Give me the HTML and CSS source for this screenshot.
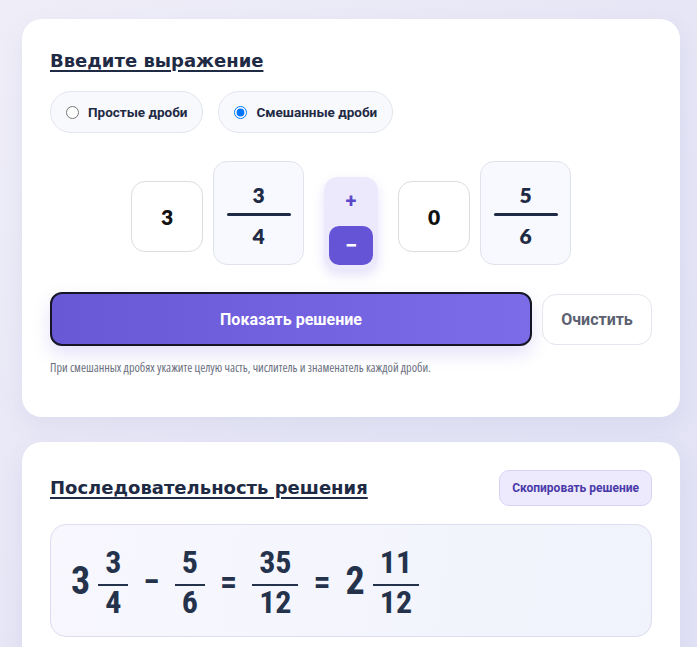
FILE: index.html
```html
<!DOCTYPE html>
<html lang="ru">
<head>
<meta charset="utf-8">
<title>Калькулятор дробей</title>
<link rel="stylesheet" href="styles.css">
</head>
<body>
<main class="page">
  <section class="card card-input">
    <h2 class="title title-input">Введите выражение</h2>
    <div class="modes">
      <label class="pill"><input type="radio" name="mode"><span>Простые дроби</span></label>
      <label class="pill"><input type="radio" name="mode" checked><span>Смешанные дроби</span></label>
    </div>
    <div class="expr">
      <div class="mixed">
        <input class="whole" value="3">
        <div class="frac-box">
          <input class="num" value="3">
          <div class="bar"></div>
          <input class="num" value="4">
        </div>
      </div>
      <div class="ops">
        <button class="op">+</button>
        <button class="op op-active">−</button>
      </div>
      <div class="mixed">
        <input class="whole" value="0">
        <div class="frac-box">
          <input class="num" value="5">
          <div class="bar"></div>
          <input class="num" value="6">
        </div>
      </div>
    </div>
    <div class="actions">
      <button class="btn-primary">Показать решение</button>
      <button class="btn-secondary">Очистить</button>
    </div>
    <p class="hint">При смешанных дробях укажите целую часть, числитель и знаменатель каждой дроби.</p>
  </section>

  <section class="card card-result">
    <div class="result-head">
      <h2 class="title title-result">Последовательность решения</h2>
      <button class="btn-copy">Скопировать решение</button>
    </div>
    <div class="result-box">
      <span class="int">3</span>
      <span class="frac"><span class="n">3</span><span class="d">4</span></span>
      <span class="sign">−</span>
      <span class="frac"><span class="n">5</span><span class="d">6</span></span>
      <span class="sign">=</span>
      <span class="frac"><span class="n">35</span><span class="d">12</span></span>
      <span class="sign">=</span>
      <span class="int">2</span>
      <span class="frac"><span class="n">11</span><span class="d">12</span></span>
    </div>
  </section>
</main>
</body>
</html>
```
FILE: styles.css
```css
html, body {
  margin: 0;
  padding: 0;
}
body {
  background: linear-gradient(135deg, #efeef8 0%, #e6e6f6 50%, #e2e2f5 100%);
  min-height: 647px;
  font-family: Roboto, "Noto Sans", sans-serif;
  color: #1f2a44;
}
.page {
  padding: 19px 17px 0 22px;
}
.card {
  background: #fff;
  border-radius: 20px;
  padding: 28px;
  box-shadow: 0 8px 24px rgba(90, 90, 170, 0.08);
}
.card-input {
  padding-bottom: 41px;
  margin-bottom: 25px;
}
.title {
  margin: 0;
  font-family: "DejaVu Sans", Verdana, sans-serif;
  font-size: 18px;
  font-weight: 700;
  color: #1f2a44;
  text-decoration: underline;
  text-decoration-thickness: 2px;
  text-underline-offset: 3px;
}
.title-input {
  line-height: 28px;
  margin-bottom: 16px;
}
.title-result {
  line-height: 28px;
}
.modes {
  display: flex;
  gap: 15px;
}
.pill {
  display: flex;
  align-items: center;
  gap: 9px;
  height: 42px;
  box-sizing: border-box;
  padding: 0 15px;
  border: 1px solid #e3e5ef;
  border-radius: 21px;
  background: #f8f9fd;
  font-size: 13.5px;
  font-weight: 700;
  color: #1f2a44;
}
.pill input {
  margin: 0;
  width: 13px;
  height: 13px;
}
.expr {
  display: flex;
  justify-content: center;
  align-items: center;
  gap: 20px;
  margin-top: 23px;
}
.mixed {
  display: flex;
  align-items: center;
  gap: 10px;
}
.whole {
  width: 72px;
  height: 71px;
  box-sizing: border-box;
  border: 1px solid #dcdce3;
  border-radius: 14px;
  background: #fff;
  text-align: center;
  font-family: Lato, Roboto, sans-serif;
  font-size: 21px;
  font-weight: 800;
  color: #111;
  padding: 0;
  margin-top: 6px;
}
.frac-box {
  width: 91px;
  height: 104px;
  box-sizing: border-box;
  border: 1px solid #e1e3ec;
  border-radius: 14px;
  background: #f8f9fe;
  display: flex;
  flex-direction: column;
  align-items: center;
  padding-top: 15px;
}
.num {
  width: 64px;
  height: 34px;
  box-sizing: border-box;
  border: none;
  background: transparent;
  text-align: center;
  font-family: Lato, Roboto, sans-serif;
  font-size: 21px;
  font-weight: 800;
  color: #1f2a44;
  padding: 0;
}
.bar {
  width: 64px;
  height: 3px;
  background: #1f2a44;
  border-radius: 2px;
  margin: 2px 0;
}
.ops {
  display: flex;
  flex-direction: column;
  gap: 6px;
  width: 54px;
  box-sizing: border-box;
  padding: 5px;
  background: #ece9fc;
  border-radius: 14px;
  box-shadow: 0 5px 12px rgba(110, 90, 220, 0.18);
  margin-top: 21px;
}
.op {
  width: 44px;
  height: 38px;
  border: none;
  border-radius: 10px;
  background: transparent;
  color: #5a48c8;
  font-family: Roboto, sans-serif;
  font-size: 20px;
  font-weight: 700;
  padding: 0;
}
.op-active {
  height: 39px;
  background: #6555d6;
  color: #fff;
  font-size: 22px;
}
.actions {
  display: flex;
  align-items: center;
  gap: 10px;
  margin-top: 22px;
}
.btn-primary {
  flex: 1;
  height: 54px;
  border: 2px solid #151526;
  border-radius: 12px;
  background: linear-gradient(90deg, #6858d6 0%, #7d6ce8 100%);
  color: #fff;
  font-family: Roboto, sans-serif;
  font-size: 16px;
  font-weight: 700;
  box-shadow: 0 8px 18px rgba(110, 90, 220, 0.18);
}
.btn-secondary {
  width: 110px;
  height: 51px;
  border: 1px solid #e4e5ee;
  border-radius: 14px;
  background: #fff;
  color: #5b6170;
  font-family: Roboto, sans-serif;
  font-size: 16px;
  font-weight: 700;
}
.hint {
  margin: 14px 0 0;
  font-family: "Open Sans", sans-serif;
  font-stretch: 75%;
  font-size: 12.2px;
  line-height: 16px;
  color: #6b7080;
}
.result-head {
  display: flex;
  justify-content: space-between;
  align-items: center;
}
.btn-copy {
  height: 36px;
  padding: 0 12px;
  border: 1px solid #d9d2f6;
  border-radius: 10px;
  background: #eeeafd;
  color: #4a3aa8;
  font-family: Roboto, sans-serif;
  font-size: 12px;
  font-weight: 700;
}
.result-box {
  margin-top: 18px;
  height: 113px;
  box-sizing: border-box;
  border: 1px solid #dddcf0;
  border-radius: 16px;
  background: linear-gradient(100deg, #f8f7fe 0%, #f0f3fc 100%);
  display: flex;
  align-items: center;
  gap: 11px;
  padding: 0 20px;
  font-family: Roboto, sans-serif;
  font-stretch: 75%;
  font-weight: 700;
  color: #25324b;
}
.int {
  font-size: 38px;
  line-height: 40px;
  margin-right: -3px;
}
.sign {
  font-size: 34px;
  line-height: 40px;
  margin: 0 4px;
}
.frac {
  display: inline-flex;
  flex-direction: column;
  align-items: center;
  font-size: 32px;
}
.frac .n,
.frac .d {
  padding: 0 7px;
}
.frac .n {
  line-height: 36px;
  padding-bottom: 4px;
  border-bottom: 2px solid #25324b;
}
.frac .d {
  line-height: 32px;
}
```
